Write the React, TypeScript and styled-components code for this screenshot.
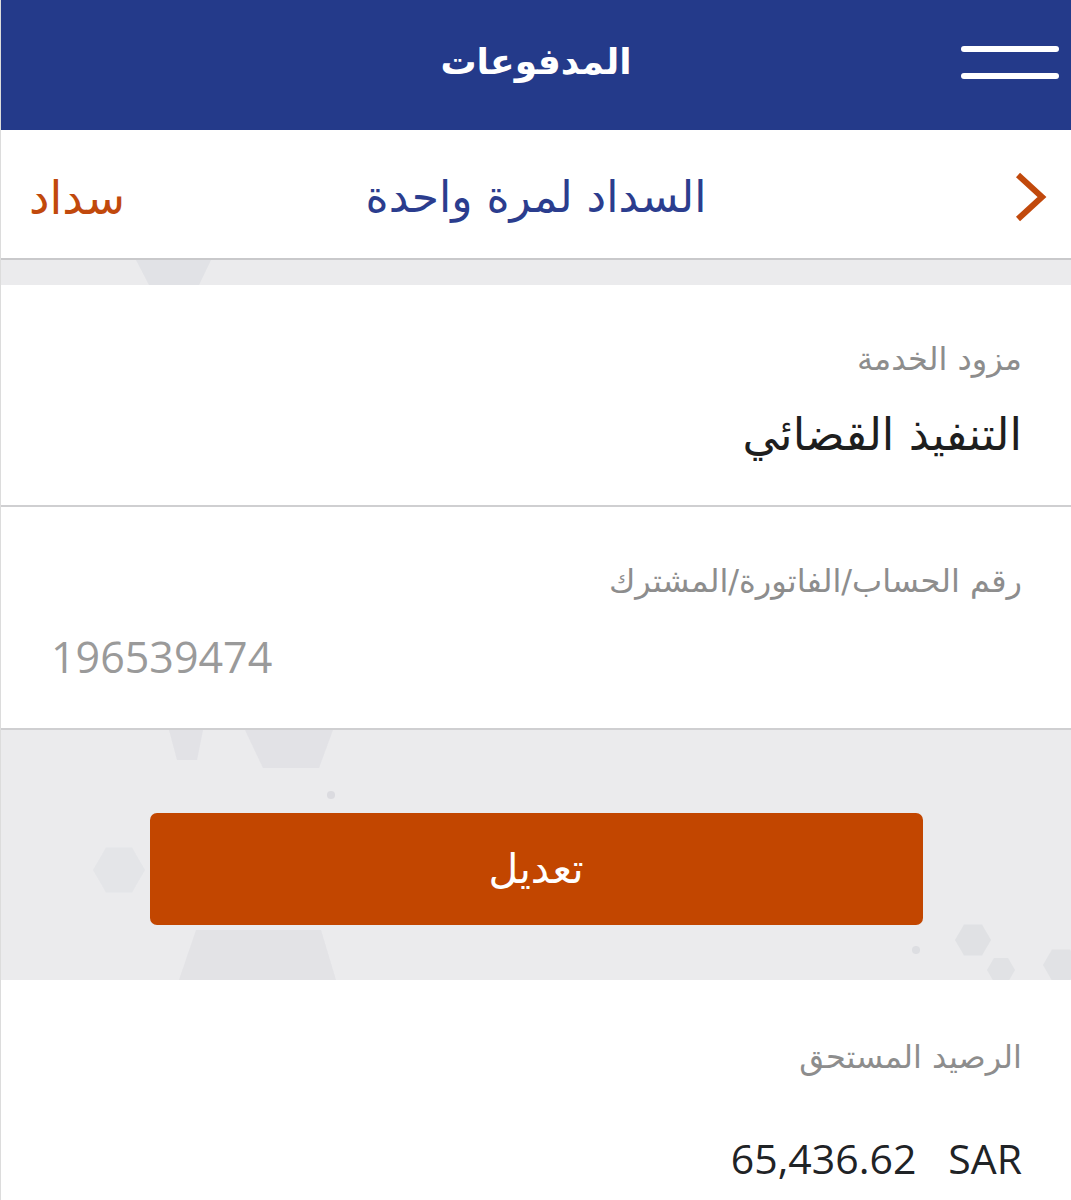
import React from "react";
import styled, { createGlobalStyle } from "styled-components";

const GlobalStyle = createGlobalStyle`
  html, body {
    margin: 0;
    padding: 0;
    background: #ffffff;
  }
  body {
    font-family: "DejaVu Sans", "Noto Sans", sans-serif;
  }
`;

const Page = styled.div`
  direction: rtl;
  width: 100%;
  min-height: 1200px;
  display: flex;
  flex-direction: column;
  background: #ffffff;
  border-left: 1px solid #dcdcdc;
  box-sizing: border-box;
`;

const Header = styled.header`
  height: 130px;
  background: #243a8a;
  display: grid;
  grid-template-columns: 120px 1fr 120px;
  align-items: center;
`;

const MenuButton = styled.div`
  display: flex;
  flex-direction: column;
  gap: 21px;
  padding-right: 12px;
  margin-top: -6px;
`;

const MenuLine = styled.span`
  display: block;
  width: 98px;
  height: 6px;
  border-radius: 3px;
  background: #ffffff;
`;

const Title = styled.h1`
  margin: 0;
  text-align: center;
  color: #ffffff;
  font-size: 36px;
  font-weight: bold;
  margin-top: -8px;
`;

const SubBar = styled.div`
  height: 128px;
  display: grid;
  grid-template-columns: 140px 1fr 140px;
  align-items: center;
  border-bottom: 2px solid #c9c9cb;
  background: #ffffff;
`;

const Chevron = styled.div`
  display: flex;
  justify-content: flex-start;
  padding-right: 24px;
  margin-top: 6px;
`;

const SubTitle = styled.div`
  text-align: center;
  color: #2b3d8e;
  font-size: 44px;
  margin-top: 4px;
`;

const SadadLink = styled.div`
  text-align: left;
  padding-left: 28px;
  color: #c1490c;
  font-size: 46px;
  margin-top: 8px;
`;

const GrayZone = styled.div<{ $height: number }>`
  position: relative;
  overflow: hidden;
  height: ${(p) => p.$height}px;
  background: #ebebed;
  display: flex;
  align-items: center;
  justify-content: center;
`;

const Backdrop = styled.svg`
  position: absolute;
  inset: 0;
  width: 100%;
  height: 100%;
  pointer-events: none;
`;

const Field = styled.div<{ $height: number; $border?: boolean }>`
  height: ${(p) => p.$height}px;
  box-sizing: border-box;
  padding: 0 49px;
  display: flex;
  flex-direction: column;
  border-bottom: ${(p) => (p.$border ? "2px solid #cfcfd1" : "none")};
`;

const Label = styled.div<{ $top: number }>`
  margin-top: ${(p) => p.$top}px;
  color: #8d8d8d;
  font-size: 32px;
  line-height: 44px;
  text-align: right;
`;

const Value = styled.div<{ $gap: number }>`
  margin-top: ${(p) => p.$gap}px;
  color: #1e1e1e;
  font-size: 45px;
  line-height: 56px;
  text-align: right;
`;

const NumberValue = styled.div<{ $gap: number }>`
  margin-top: ${(p) => p.$gap}px;
  color: #9a9a9a;
  font-family: "Open Sans", "DejaVu Sans", sans-serif;
  font-size: 43px;
  line-height: 56px;
  text-align: left;
  padding-left: 1px;
`;

const Amount = styled.div<{ $gap: number }>`
  margin-top: ${(p) => p.$gap}px;
  direction: ltr;
  color: #1f2326;
  font-family: "Open Sans", "DejaVu Sans", sans-serif;
  font-size: 41px;
  line-height: 56px;
  text-align: right;
  white-space: pre;
`;

const EditButton = styled.button`
  position: relative;
  width: 773px;
  height: 112px;
  margin-top: 27px;
  border: none;
  border-radius: 7px;
  background: #c24600;
  color: #ffffff;
  font-family: "DejaVu Sans", sans-serif;
  font-size: 41px;
  cursor: pointer;
`;

const hex = (cx: number, cy: number, r: number) => {
  const pts: string[] = [];
  for (let i = 0; i < 6; i++) {
    const a = (Math.PI / 3) * i;
    pts.push(`${(cx + r * Math.cos(a)).toFixed(1)},${(cy + r * Math.sin(a)).toFixed(1)}`);
  }
  return pts.join(" ");
};

export default function App() {
  return (
    <>
      <GlobalStyle />
      <Page>
        <Header>
          <MenuButton>
            <MenuLine />
            <MenuLine />
          </MenuButton>
          <Title>المدفوعات</Title>
          <div />
        </Header>

        <SubBar>
          <Chevron>
            <svg width="34" height="50" viewBox="0 0 34 50">
              <path
                d="M5 3 L29 25 L5 47"
                fill="none"
                stroke="#c1490c"
                strokeWidth="6"
                strokeLinejoin="miter"
              />
            </svg>
          </Chevron>
          <SubTitle>السداد لمرة واحدة</SubTitle>
          <SadadLink>سداد</SadadLink>
        </SubBar>

        <GrayZone $height={25}>
          <Backdrop>
            <polygon points="135,0 210,0 198,25 148,25" fill="#d9dae0" opacity="0.55" />
          </Backdrop>
        </GrayZone>

        <Field $height={222} $border>
          <Label $top={52}>مزود الخدمة</Label>
          <Value $gap={26}>التنفيذ القضائي</Value>
        </Field>

        <Field $height={223} $border>
          <Label $top={52}>رقم الحساب/الفاتورة/المشترك</Label>
          <NumberValue $gap={26}>196539474</NumberValue>
        </Field>

        <GrayZone $height={250}>
          <Backdrop>
            <polygon points="168,0 202,0 196,30 176,30" fill="#d6d7dd" opacity="0.45" />
            <polygon points="244,0 332,0 318,38 262,38" fill="#d6d7dd" opacity="0.45" />
            <polygon points={hex(118, 140, 26)} fill="#d8d9df" opacity="0.35" />
            <polygon points="178,250 335,250 320,200 195,200" fill="#d6d7dd" opacity="0.4" />
            <polygon points={hex(972, 210, 18)} fill="#d3d4da" opacity="0.45" />
            <polygon points={hex(1000, 240, 14)} fill="#d3d4da" opacity="0.4" />
            <polygon points={hex(1060, 235, 18)} fill="#d3d4da" opacity="0.4" />
            <circle cx="330" cy="65" r="4" fill="#d0d1d7" opacity="0.6" />
            <circle cx="915" cy="220" r="4" fill="#d0d1d7" opacity="0.5" />
          </Backdrop>
          <EditButton>تعديل</EditButton>
        </GrayZone>

        <Field $height={220}>
          <Label $top={55}>الرصيد المستحق</Label>
          <Amount $gap={51}>{"65,436.62   SAR"}</Amount>
        </Field>
      </Page>
    </>
  );
}
